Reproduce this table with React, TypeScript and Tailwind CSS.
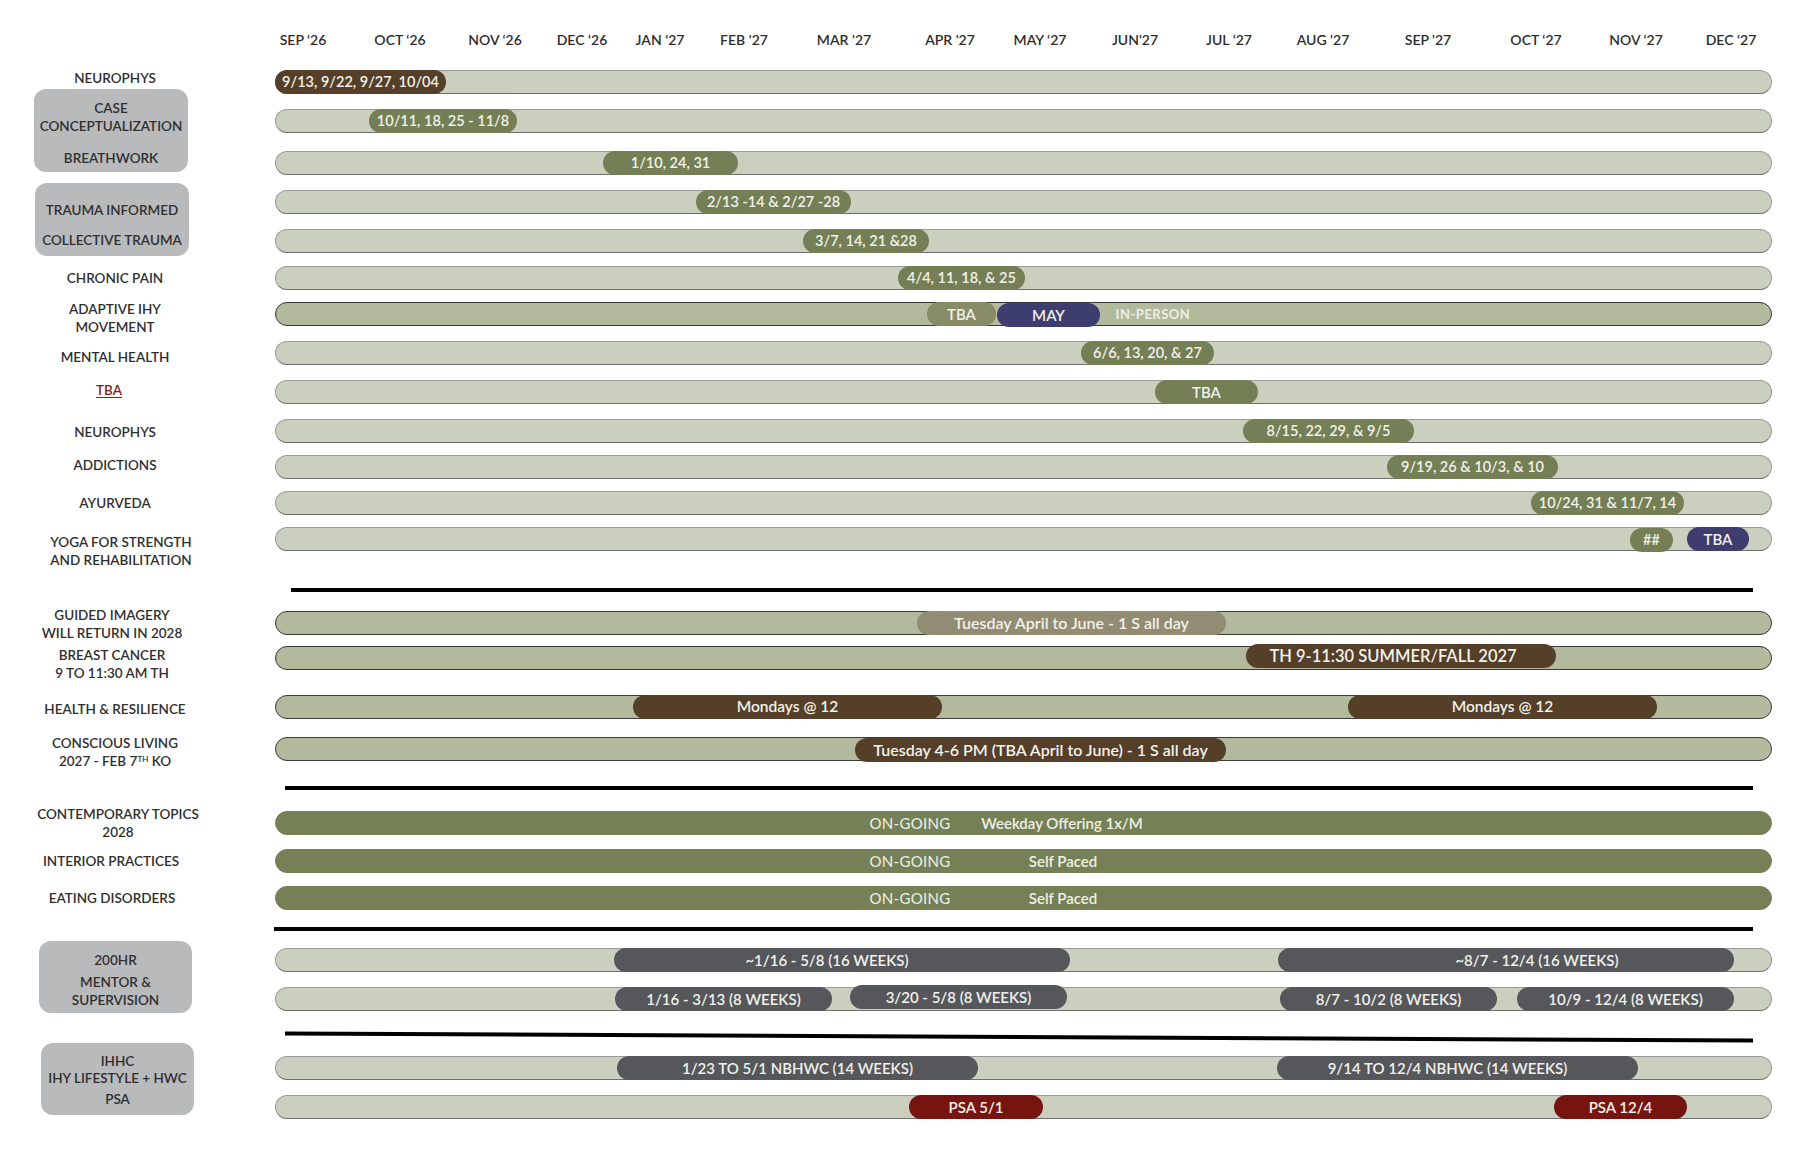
import React from "react";

const BX = 275;

const OLIVE = "bg-[#757f55]";
const BROWN = "bg-[#553f28]";
const NAVY = "bg-[#3e3d6f]";
const GRAY = "bg-[#55575b]";
const RED = "bg-[#76150f]";
const KHAKI = "bg-[#918c72]";
const TBAOL = "bg-[#878b66]";

type Pill = { x1: number; x2: number; text: string; bg: string; cls?: string };
type Txt = { x: number; text: string; cls: string };
type Kind = "light" | "dark" | "solid";

const months: { x: number; t: string }[] = [
  { x: 303, t: "SEP \u201826" },
  { x: 400, t: "OCT \u201826" },
  { x: 495, t: "NOV \u201826" },
  { x: 582, t: "DEC \u201826" },
  { x: 660, t: "JAN \u201827" },
  { x: 744, t: "FEB '27" },
  { x: 844, t: "MAR '27" },
  { x: 950, t: "APR '27" },
  { x: 1040, t: "MAY \u201827" },
  { x: 1135, t: "JUN'27" },
  { x: 1229, t: "JUL \u201827" },
  { x: 1323, t: "AUG '27" },
  { x: 1428, t: "SEP '27" },
  { x: 1536, t: "OCT \u201827" },
  { x: 1636, t: "NOV \u201827" },
  { x: 1731, t: "DEC \u201827" },
];

function Bar({
  kind = "light",
  pills = [],
  texts = [],
  cls = "",
}: {
  kind?: Kind;
  pills?: Pill[];
  texts?: Txt[];
  cls?: string;
}) {
  const base =
    kind === "light"
      ? "bg-[#cbcfbd] border-[#9a9a9a] border-b-[#6f6f6f]"
      : kind === "dark"
      ? "bg-[#b2b99d] border-[#3a3a3a]"
      : "bg-[#768056] border-[#768056]";
  return (
    <div className={`relative h-[24px] w-[1497px] shrink-0 rounded-full border ${base} ${cls}`}>
      {pills.map((p, i) => (
        <div
          key={i}
          className={`absolute top-[-1px] bottom-[-1px] flex items-center justify-center rounded-full whitespace-nowrap text-[#f1f1eb] font-semibold text-[14.5px] leading-none ${p.bg} ${p.cls ?? ""}`}
          style={{ left: p.x1 - BX - 1, width: p.x2 - p.x1 }}
        >
          {p.text}
        </div>
      ))}
      {texts.map((t, i) => (
        <div
          key={i}
          className={`absolute top-0 bottom-0 flex items-center -translate-x-1/2 whitespace-nowrap leading-none ${t.cls}`}
          style={{ left: t.x - BX - 1 }}
        >
          {t.text}
        </div>
      ))}
    </div>
  );
}

function Row({
  mt,
  label,
  lcls = "",
  kind = "light",
  pills,
  texts,
}: {
  mt: string;
  label: React.ReactNode;
  lcls?: string;
  kind?: Kind;
  pills?: Pill[];
  texts?: Txt[];
}) {
  return (
    <div className={`flex items-center ${mt}`}>
      <div className="flex h-[24px] w-[275px] shrink-0 items-center">
        <div
          className={`w-[230px] text-center text-[13.5px] leading-[18px] font-semibold text-[#2f2f2f] ${lcls}`}
        >
          {label}
        </div>
      </div>
      <Bar kind={kind} pills={pills} texts={texts} />
    </div>
  );
}

function Group({
  mt,
  boxCls,
  box,
  children,
}: {
  mt: string;
  boxCls: string;
  box: React.ReactNode;
  children: React.ReactNode;
}) {
  return (
    <div className={`flex items-start ${mt}`}>
      <div className="w-[275px] shrink-0">
        <div
          className={`rounded-[12px] bg-[#b9babc] text-center text-[13.5px] font-semibold text-[#2f2f2f] ${boxCls}`}
        >
          {box}
        </div>
      </div>
      <div className="flex flex-col">{children}</div>
    </div>
  );
}

function Divider({ mt, cls }: { mt: string; cls: string }) {
  return (
    <div className={`flex ${mt}`}>
      <div className="w-[275px] shrink-0" />
      <div className={`h-[4px] bg-black ${cls}`} />
    </div>
  );
}

const onGoing = "text-[15px] font-normal text-[#eef0e6] tracking-[0.3px]";
const onText = "text-[15px] font-semibold text-[#eef0e6]";

export default function App() {
  return (
    <div className="min-h-[1164px] w-[1812px] bg-white pt-[30px] font-['Lato',sans-serif]">
      {/* header */}
      <div className="flex h-[20px]">
        <div className="w-[275px] shrink-0" />
        <div className="relative h-[20px] w-[1497px]">
          {months.map((m) => (
            <span
              key={m.t}
              className="absolute top-0 -translate-x-1/2 whitespace-nowrap text-[14px] leading-[20px] font-semibold text-[#2d2d2d]"
              style={{ left: m.x - BX }}
            >
              {m.t}
            </span>
          ))}
        </div>
      </div>

      <Row
        mt="mt-[20px]"
        label="NEUROPHYS"
        lcls="-translate-y-[4px]"
        pills={[{ x1: 275, x2: 446, text: "9/13, 9/22, 9/27, 10/04", bg: BROWN }]}
      />

      <Group
        mt="mt-[15px]"
        boxCls="ml-[34px] w-[154px] h-[83px] -mt-[20px] pt-[10px] leading-[18px]"
        box={
          <>
            <div>CASE</div>
            <div>CONCEPTUALIZATION</div>
            <div className="mt-[14px]">BREATHWORK</div>
          </>
        }
      >
        <Bar pills={[{ x1: 369, x2: 517, text: "10/11, 18, 25 - 11/8", bg: OLIVE }]} />
        <Bar cls="mt-[18px]" pills={[{ x1: 603, x2: 738, text: "1/10, 24, 31", bg: OLIVE }]} />
      </Group>

      <Group
        mt="mt-[15px]"
        boxCls="ml-[35px] w-[154px] h-[73px] -mt-[7px] pt-[18px] leading-[18px]"
        box={
          <>
            <div>TRAUMA INFORMED</div>
            <div className="mt-[12px]">COLLECTIVE TRAUMA</div>
          </>
        }
      >
        <Bar pills={[{ x1: 696, x2: 851, text: "2/13 -14 & 2/27 -28", bg: OLIVE }]} />
        <Bar cls="mt-[15px]" pills={[{ x1: 803, x2: 929, text: "3/7, 14, 21 &28", bg: OLIVE }]} />
      </Group>

      <Row
        mt="mt-[10px]"
        label="CHRONIC PAIN"
        pills={[{ x1: 898, x2: 1025, text: "4/4, 11, 18, & 25", bg: OLIVE }]}
      />
      <Row
        mt="mt-[12px]"
        kind="dark"
        label={
          <>
            ADAPTIVE IHY
            <br />
            MOVEMENT
          </>
        }
        lcls="translate-y-[4px]"
        pills={[
          { x1: 927, x2: 996, text: "TBA", bg: TBAOL, cls: "text-[15px] font-normal" },
          { x1: 997, x2: 1100, text: "MAY", bg: NAVY, cls: "text-[15px] font-normal top-[0px] bottom-[-2px]" },
        ]}
        texts={[{ x: 1153, text: "IN-PERSON", cls: "text-[13px] font-bold tracking-[0.5px] text-[#eceee4]" }]}
      />
      <Row
        mt="mt-[15px]"
        label="MENTAL HEALTH"
        lcls="translate-y-[4px]"
        pills={[{ x1: 1081, x2: 1214, text: "6/6, 13, 20, & 27", bg: OLIVE }]}
      />
      <Row
        mt="mt-[15px]"
        label={<span className="text-[#8b1c13] underline decoration-[#8b1c13] underline-offset-2">TBA</span>}
        lcls="-translate-y-[2px] -translate-x-[6px]"
        pills={[{ x1: 1155, x2: 1258, text: "TBA", bg: OLIVE, cls: "text-[15px]" }]}
      />
      <Row
        mt="mt-[15px]"
        label="NEUROPHYS"
        lcls="translate-y-[1px]"
        pills={[{ x1: 1243, x2: 1414, text: "8/15, 22, 29, & 9/5", bg: OLIVE }]}
      />
      <Row
        mt="mt-[12px]"
        label="ADDICTIONS"
        lcls="-translate-y-[2px]"
        pills={[{ x1: 1387, x2: 1558, text: "9/19, 26 & 10/3, & 10", bg: OLIVE }]}
      />
      <Row
        mt="mt-[12px]"
        label="AYURVEDA"
        pills={[{ x1: 1531, x2: 1684, text: "10/24, 31 & 11/7, 14", bg: OLIVE }]}
      />
      <Row
        mt="mt-[12px]"
        label={
          <>
            YOGA FOR STRENGTH
            <br />
            AND REHABILITATION
          </>
        }
        lcls="translate-y-[12px] translate-x-[6px]"
        pills={[
          { x1: 1630, x2: 1673, text: "##", bg: OLIVE, cls: "top-[0px] bottom-[-2px]" },
          { x1: 1687, x2: 1749, text: "TBA", bg: NAVY, cls: "text-[15px] font-normal" },
        ]}
      />

      <Divider mt="mt-[37px]" cls="ml-[16px] w-[1462px]" />

      <Row
        mt="mt-[19px]"
        kind="dark"
        label={
          <>
            GUIDED IMAGERY
            <br />
            WILL RETURN IN 2028
          </>
        }
        lcls="leading-[16px] translate-y-[1px] -translate-x-[3px]"
        pills={[{ x1: 917, x2: 1226, text: "Tuesday April to June - 1 S all day", bg: KHAKI, cls: "text-[16px]" }]}
      />
      <Row
        mt="mt-[11px]"
        kind="dark"
        label={
          <>
            BREAST CANCER
            <br />9 TO 11:30 AM TH
          </>
        }
        lcls="leading-[17px] translate-y-[6px] -translate-x-[3px]"
        pills={[
          {
            x1: 1246,
            x2: 1556,
            text: "TH 9-11:30 SUMMER/FALL 2027",
            bg: BROWN,
            cls: "text-[16.5px] top-[-3px] bottom-[1px] pr-[16px]",
          },
        ]}
      />
      <Row
        mt="mt-[25px]"
        kind="dark"
        label="HEALTH & RESILIENCE"
        lcls="translate-y-[2px]"
        pills={[
          { x1: 633, x2: 942, text: "Mondays @ 12", bg: BROWN, cls: "text-[15.5px]" },
          { x1: 1348, x2: 1657, text: "Mondays @ 12", bg: BROWN, cls: "text-[15.5px]" },
        ]}
      />
      <Row
        mt="mt-[18px]"
        kind="dark"
        label={
          <>
            CONSCIOUS LIVING
            <br />
            2027 - FEB 7<sup className="text-[8px]">TH</sup> KO
          </>
        }
        lcls="translate-y-[3px]"
        pills={[
          {
            x1: 855,
            x2: 1226,
            text: "Tuesday 4-6 PM (TBA April to June) - 1 S all day",
            bg: BROWN,
            cls: "text-[16px] top-[0px] bottom-[-2px]",
          },
        ]}
      />

      <Divider mt="mt-[25px]" cls="ml-[10px] w-[1468px]" />

      <Row
        mt="mt-[21px]"
        kind="solid"
        label={
          <>
            CONTEMPORARY TOPICS
            <br />
            2028
          </>
        }
        lcls="translate-x-[3px]"
        texts={[
          { x: 910, text: "ON-GOING", cls: onGoing },
          { x: 1062, text: "Weekday Offering 1x/M", cls: onText },
        ]}
      />
      <Row
        mt="mt-[14px]"
        kind="solid"
        label="INTERIOR PRACTICES"
        lcls="-translate-x-[4px]"
        texts={[
          { x: 910, text: "ON-GOING", cls: onGoing },
          { x: 1063, text: "Self Paced", cls: onText },
        ]}
      />
      <Row
        mt="mt-[13px]"
        kind="solid"
        label="EATING DISORDERS"
        lcls="-translate-x-[3px]"
        texts={[
          { x: 910, text: "ON-GOING", cls: onGoing },
          { x: 1063, text: "Self Paced", cls: onText },
        ]}
      />

      <Divider mt="mt-[17px]" cls="-ml-[1px] w-[1479px]" />

      <Group
        mt="mt-[17px]"
        boxCls="ml-[39px] w-[153px] h-[72px] -mt-[7px] pt-[10px] leading-[18px]"
        box={
          <>
            <div>200HR</div>
            <div className="mt-[4px]">MENTOR &amp;</div>
            <div>SUPERVISION</div>
          </>
        }
      >
        <Bar
          pills={[
            { x1: 614, x2: 1070, text: "~1/16 - 5/8 (16 WEEKS)", bg: GRAY, cls: "text-[15px] pr-[30px]" },
            { x1: 1278, x2: 1734, text: "~8/7 - 12/4 (16 WEEKS)", bg: GRAY, cls: "text-[15px] pl-[62px]" },
          ]}
        />
        <Bar
          cls="mt-[15px]"
          pills={[
            { x1: 615, x2: 832, text: "1/16 - 3/13 (8 WEEKS)", bg: GRAY, cls: "text-[15px]" },
            { x1: 850, x2: 1067, text: "3/20 - 5/8 (8 WEEKS)", bg: GRAY, cls: "text-[15px] top-[-3px] bottom-[1px]" },
            { x1: 1280, x2: 1497, text: "8/7 - 10/2 (8 WEEKS)", bg: GRAY, cls: "text-[15px]" },
            { x1: 1517, x2: 1734, text: "10/9 - 12/4 (8 WEEKS)", bg: GRAY, cls: "text-[15px]" },
          ]}
        />
      </Group>

      <Divider mt="mt-[22px]" cls="ml-[10px] w-[1468px] rotate-[0.27deg]" />

      <Group
        mt="mt-[17px]"
        boxCls="ml-[41px] w-[153px] h-[72px] -mt-[13px] pt-[10px] leading-[17px]"
        box={
          <>
            <div>IHHC</div>
            <div>IHY LIFESTYLE + HWC</div>
            <div className="mt-[4px]">PSA</div>
          </>
        }
      >
        <Bar
          pills={[
            { x1: 617, x2: 978, text: "1/23 TO 5/1 NBHWC (14 WEEKS)", bg: GRAY, cls: "text-[15px]" },
            { x1: 1277, x2: 1638, text: "9/14 TO 12/4 NBHWC (14 WEEKS)", bg: GRAY, cls: "text-[15px] pr-[20px]" },
          ]}
        />
        <Bar
          cls="mt-[15px]"
          pills={[
            { x1: 909, x2: 1043, text: "PSA 5/1", bg: RED, cls: "text-[15px]" },
            { x1: 1554, x2: 1687, text: "PSA 12/4", bg: RED, cls: "text-[15px]" },
          ]}
        />
      </Group>
    </div>
  );
}
